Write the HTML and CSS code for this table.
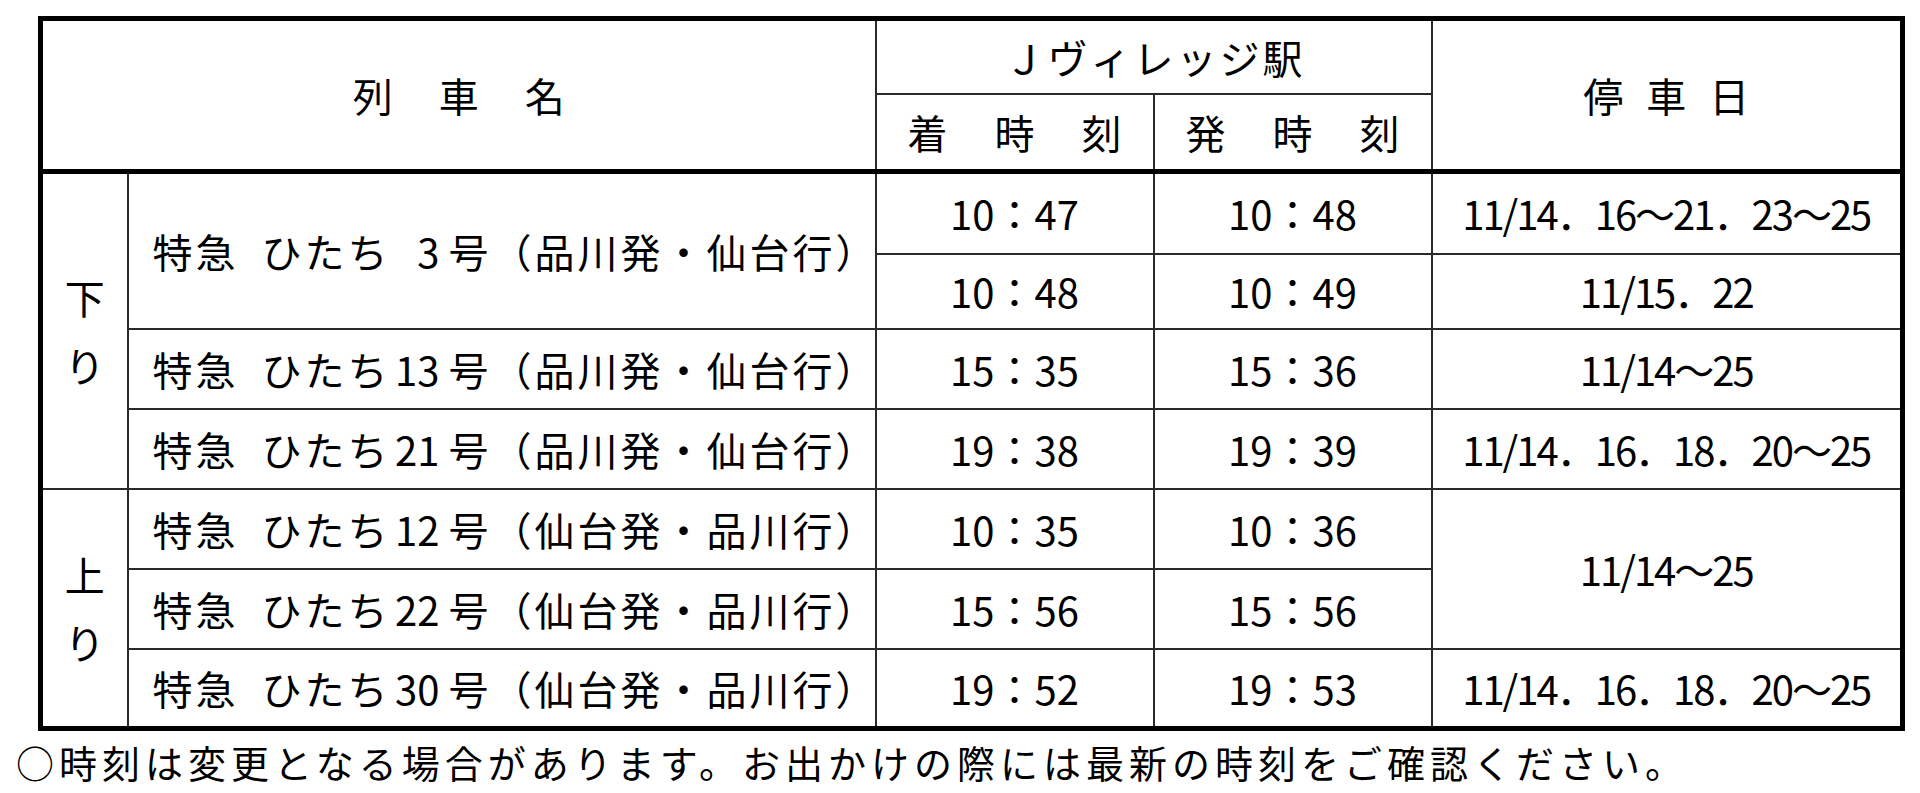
FILE: index.html
```html
<!DOCTYPE html>
<html lang="ja">
<head>
<meta charset="utf-8">
<title>Jヴィレッジ駅 停車時刻</title>
<link rel="stylesheet" href="styles.css">
</head>
<body>
<div class="page">
  <table class="timetable">
    <colgroup>
      <col class="c-dir">
      <col class="c-train">
      <col class="c-time">
      <col class="c-time">
      <col class="c-days">
    </colgroup>
    <thead>
      <tr class="hr1">
        <th colspan="2" rowspan="2"><div class="spread g-name"><span>列</span><span>車</span><span>名</span></div></th>
        <th colspan="2"><div class="spread g-station"><span>Ｊ</span><span>ヴ</span><span>ィ</span><span>レ</span><span>ッ</span><span>ジ</span><span>駅</span></div></th>
        <th rowspan="2"><div class="spread g-days"><span>停</span><span>車</span><span>日</span></div></th>
      </tr>
      <tr class="hr2">
        <th><div class="spread g-time"><span>着</span><span>時</span><span>刻</span></div></th>
        <th><div class="spread g-time"><span>発</span><span>時</span><span>刻</span></div></th>
      </tr>
    </thead>
    <tbody>
      <tr class="r-a">
        <td rowspan="4" class="dir">下<br>り</td>
        <td rowspan="2" class="train">特急&ensp;ひたち<span class="no">3</span>号（品川発・仙台行）</td>
        <td class="t dash">10：47</td>
        <td class="t dash">10：48</td>
        <td class="d dash">11/14．16～21．23～25</td>
      </tr>
      <tr class="r-b">
        <td class="t">10：48</td>
        <td class="t">10：49</td>
        <td class="d">11/15．22</td>
      </tr>
      <tr>
        <td class="train">特急&ensp;ひたち<span class="no">13</span>号（品川発・仙台行）</td>
        <td class="t">15：35</td>
        <td class="t">15：36</td>
        <td class="d">11/14～25</td>
      </tr>
      <tr>
        <td class="train">特急&ensp;ひたち<span class="no">21</span>号（品川発・仙台行）</td>
        <td class="t">19：38</td>
        <td class="t">19：39</td>
        <td class="d">11/14．16．18．20～25</td>
      </tr>
      <tr>
        <td rowspan="3" class="dir">上<br>り</td>
        <td class="train">特急&ensp;ひたち<span class="no">12</span>号（仙台発・品川行）</td>
        <td class="t">10：35</td>
        <td class="t">10：36</td>
        <td rowspan="2" class="d">11/14～25</td>
      </tr>
      <tr>
        <td class="train">特急&ensp;ひたち<span class="no">22</span>号（仙台発・品川行）</td>
        <td class="t">15：56</td>
        <td class="t">15：56</td>
      </tr>
      <tr>
        <td class="train">特急&ensp;ひたち<span class="no">30</span>号（仙台発・品川行）</td>
        <td class="t">19：52</td>
        <td class="t">19：53</td>
        <td class="d">11/14．16．18．20～25</td>
      </tr>
    </tbody>
  </table>
  <p class="note">○時刻は変更となる場合があります。お出かけの際には最新の時刻をご確認ください。</p>
</div>
</body>
</html>
```

FILE: styles.css
```css
html, body {
  margin: 0;
  padding: 0;
  background: #fff;
}

body {
  font-family: "Noto Sans CJK JP", "Noto Sans", sans-serif;
  color: #000;
}

.page {
  padding: 16px 0 0 38px;
}

.timetable {
  border-collapse: collapse;
  table-layout: fixed;
  width: 1862px;
  border: 5px solid #000;
  font-size: 40px;
  line-height: 1.2;
}

.c-dir { width: 87px; }
.c-train { width: 748px; }
.c-time { width: 278px; }
.c-days { width: 471px; }

.timetable th,
.timetable td {
  border: 2px solid #2a2a2a;
  padding: 0;
  font-weight: 400;
  text-align: center;
  vertical-align: middle;
}

.timetable thead tr:last-child th,
.timetable thead th[rowspan] {
  border-bottom: 5px solid #000;
}

.hr1 { height: 75px; }
.hr2 { height: 78px; }

.timetable tbody tr { height: 80px; }
.timetable tbody tr.r-a { height: 82px; }
.timetable tbody tr.r-b { height: 75px; }

.spread {
  display: flex;
  justify-content: center;
  white-space: nowrap;
}

.g-name { gap: 46px; }
.g-station { gap: 3px; }
.g-time { gap: 47px; }
.g-days { gap: 23px; }

.dir {
  line-height: 68px;
}

.timetable td.train {
  text-align: left;
  padding-left: 24px;
  letter-spacing: 3px;
  white-space: nowrap;
}

.train .no {
  display: inline-block;
  width: 58px;
  padding-right: 9px;
  box-sizing: border-box;
  text-align: right;
  letter-spacing: 0;
}

.t {
  letter-spacing: 0;
}

.d {
  letter-spacing: -2px;
}

.timetable td.dash {
  border-bottom: 1px dashed #000;
}

.note {
  margin: 8px 0 0 -22px;
  font-size: 38px;
  letter-spacing: 5px;
  line-height: 1.2;
}
```
